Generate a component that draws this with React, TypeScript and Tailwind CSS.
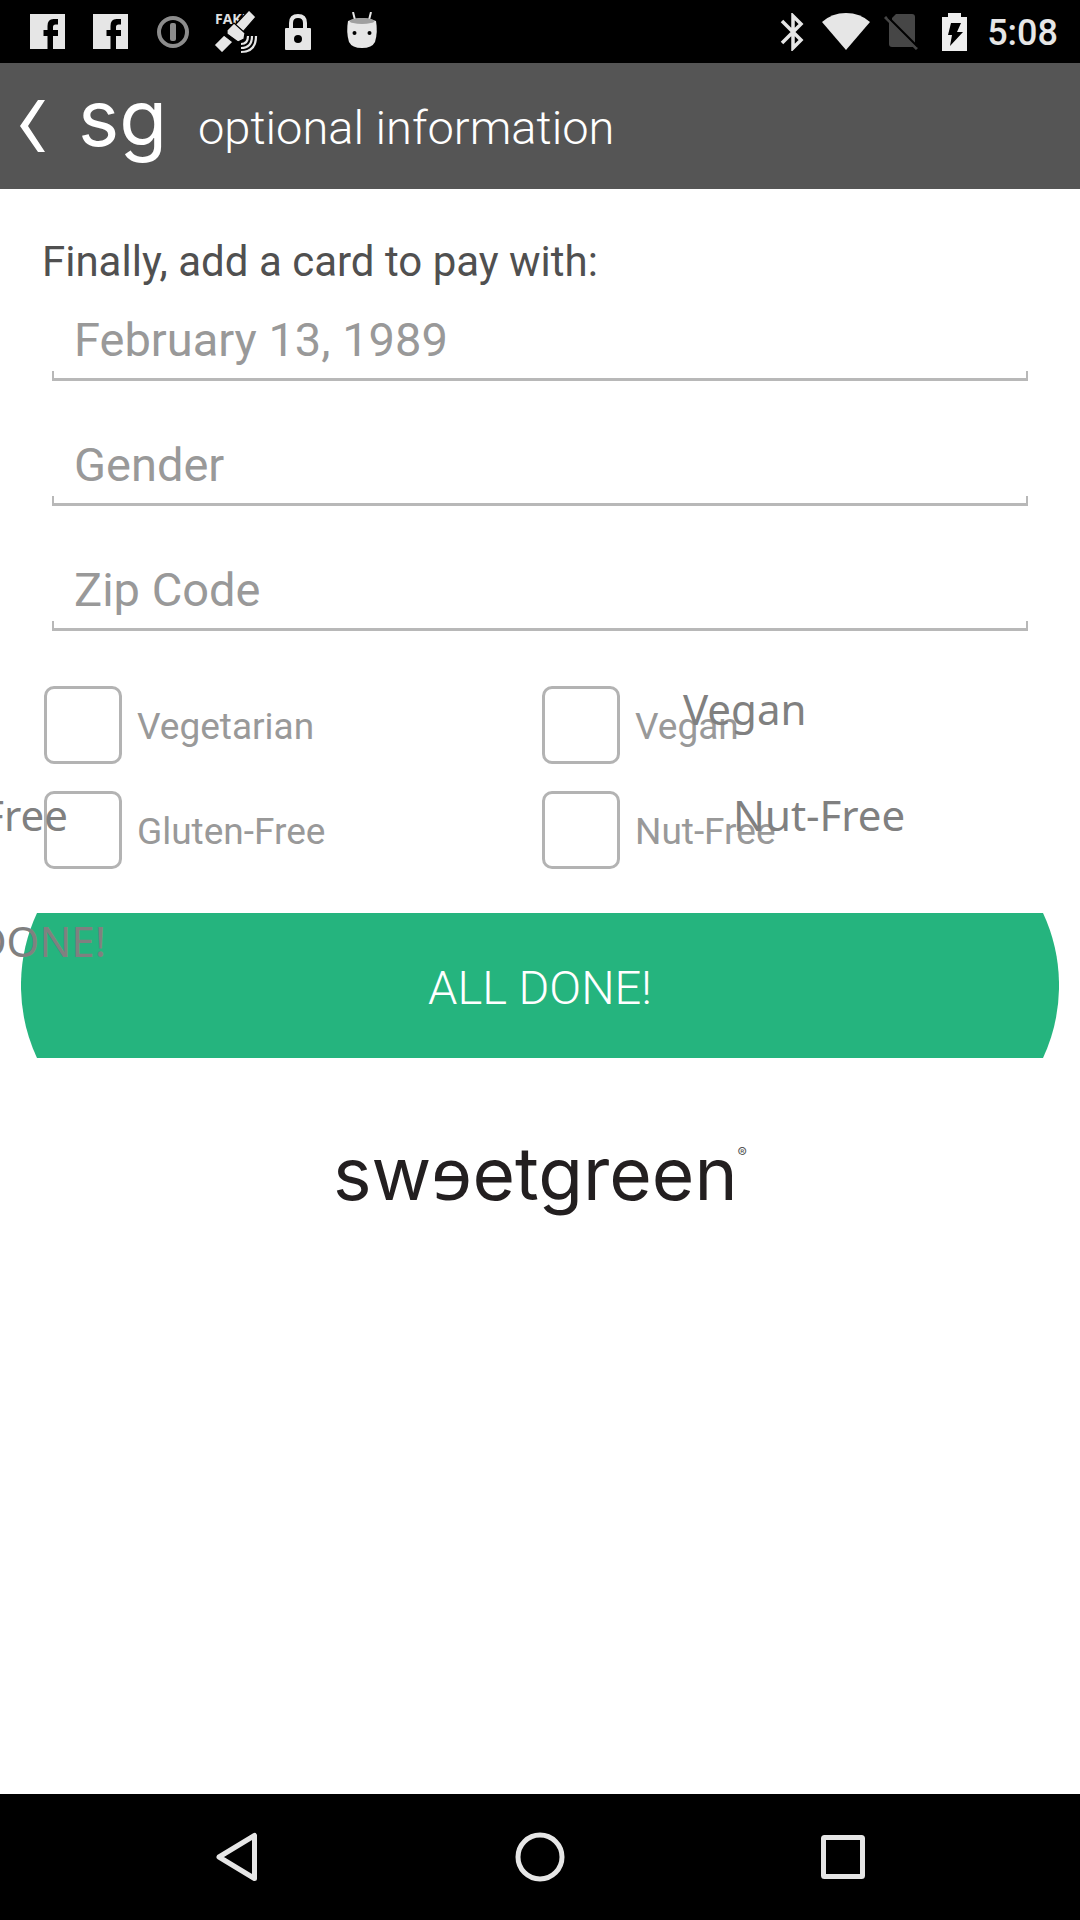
import React from "react";

function FacebookIcon() {
  return (
    <svg viewBox="0 0 35 35" className="h-[35px] w-[35px]" aria-hidden="true">
      <path
        fill="#e6e6e6"
        d="M0 0H35V35H23V22H28V16H23V13Q23 10.500 25.500 10.500H28V5H23.500Q17.500 5 17.500 12V16H13.500V22H17.500V35H0Z"
      />
    </svg>
  );
}

function StatusBar() {
  return (
    <div className="flex h-[63px] items-center justify-between bg-black pr-[22px] pl-[30px]">
      <div className="flex items-center">
        <FacebookIcon />
        <div className="w-7" />
        <FacebookIcon />
        <svg viewBox="0 0 32 32" className="ml-[29px] h-8 w-8" aria-hidden="true">
          <circle cx="16" cy="16" r="14" fill="none" stroke="#8c8c8c" strokeWidth="4" />
          <rect x="13" y="7" width="6" height="18" rx="2" fill="#8c8c8c" />
        </svg>
        <div className="relative ml-6 h-[44px] w-[46px]">
          <span className="absolute top-[2px] left-[2px] font-[Open_Sans] text-[14px] leading-[14px] font-bold text-[#e0e0e0]">
            FAKE
          </span>
          <svg viewBox="0 0 46 44" className="absolute inset-0 h-[44px] w-[46px]" aria-hidden="true">
            <g fill="#e6e6e6" stroke="#000" strokeWidth="1.200">
              <path d="M36 0L43 7L30 22L22 15Z" />
              <path d="M1 35L11 25L20 32L9 43Z" />
              <path d="M14 20L21 13L32 23L31 29L25 32L14 24Z" />
            </g>
            <path
              d="M28 34Q35 34 35 26M28 38Q39 38 39 26M28 42Q43 42 43 26"
              fill="none"
              stroke="#e6e6e6"
              strokeWidth="2.200"
            />
          </svg>
        </div>
        <svg viewBox="0 0 26 36" className="ml-[26px] h-9 w-[26px]" aria-hidden="true">
          <path d="M6 15V9Q6 2 13 2T20 9V15" fill="none" stroke="#e6e6e6" strokeWidth="4" />
          <rect y="14" width="26" height="22" rx="1" fill="#e6e6e6" />
          <circle cx="13" cy="25" r="4" fill="#000" />
        </svg>
        <svg viewBox="0 0 32 36" className="mb-1 ml-[35px] h-9 w-8" aria-hidden="true">
          <path d="M7 0L9 8M25 0L23 8" stroke="#e6e6e6" strokeWidth="2" />
          <path d="M2 9Q16 3 30 9Q32 20 29 30Q26 36 16 36T3 30Q0 20 2 9Z" fill="#e6e6e6" />
          <ellipse cx="16" cy="9" rx="12.500" ry="3" fill="#a0a0a0" />
          <circle cx="8.500" cy="21" r="2" fill="#000" />
          <circle cx="23.500" cy="21" r="2" fill="#000" />
        </svg>
      </div>
      <div className="flex items-center">
        <svg viewBox="0 0 24 38" className="h-[38px] w-6" aria-hidden="true">
          <path
            d="M2 8L21 27L13 35V3L21 11L2 30"
            fill="none"
            stroke="#e6e6e6"
            strokeWidth="3.500"
          />
        </svg>
        <svg viewBox="0 0 48 37" className="ml-[18px] h-[37px] w-12" aria-hidden="true">
          <path d="M0 9Q10 0 24 0T48 9L24 37Z" fill="#e6e6e6" />
        </svg>
        <svg viewBox="0 0 36 36" className="ml-[14px] h-9 w-9" aria-hidden="true">
          <path d="M12 0H28Q31 0 31 3V31L8 8V4Z" fill="#464646" />
          <path d="M5 8L29 32V33H8Q5 33 5 30Z" fill="#464646" />
          <path d="M1 3L33 35" stroke="#464646" strokeWidth="3" />
          <path d="M4 3L34 33" stroke="#000" strokeWidth="2" />
        </svg>
        <svg viewBox="0 0 25 38" className="ml-[22px] h-[38px] w-[25px]" aria-hidden="true">
          <path d="M6 0H19V4H25V38H0V4H6Z" fill="#eee" />
          <path d="M9 10H19L15 19H21L8 33L10 22H6Z" fill="#000" />
        </svg>
        <span className="ml-5 pt-[2px] text-[36px] leading-[42px] font-medium text-[#e6e6e6]">5:08</span>
      </div>
    </div>
  );
}

function Header() {
  return (
    <header className="flex h-[126px] items-center bg-[#555] pl-5 text-white">
      <button type="button" aria-label="Back" className="h-[52px] w-[26px]">
        <svg viewBox="0 0 26 52" className="h-[52px] w-[26px]">
          <path d="M18 0H25L8 26L25 52H18L0 26Z" fill="#fff" />
        </svg>
      </button>
      <span className="ml-8 w-[88px] pb-4 font-[Inter] text-[78px] leading-[88px] text-white">sg</span>
      <h1 className="ml-8 pt-1 text-[47px] leading-[56px] font-light">optional information</h1>
    </header>
  );
}

function Field({ label, value }: { label: string; value?: string }) {
  return (
    <div className="h-[125px]">
      <input
        type="text"
        aria-label={label}
        placeholder={label}
        defaultValue={value}
        className="block h-[62px] w-full bg-transparent px-[22px] pt-px text-[47px] text-[#999] outline-none placeholder:text-[#999] placeholder:opacity-100"
      />
      <div className="h-[10px] border-x-2 border-b-3 border-[#b8b8b8]" />
    </div>
  );
}

function Option({ label }: { label: string }) {
  return (
    <label className="flex h-[78px] items-center gap-[15px] text-[37px] text-[#999]">
      <input
        type="checkbox"
        className="h-[78px] w-[78px] appearance-none rounded-[10px] border-[3px] border-[#b3b3b3] bg-white checked:bg-[#25b47e]"
      />
      <span className="pt-1">{label}</span>
    </label>
  );
}

const overlay =
  "pointer-events-none absolute font-[Noto_Sans] whitespace-nowrap text-[#808080] text-[42px] leading-[58px]";

export default function App() {
  return (
    <div className="flex min-h-screen flex-col overflow-hidden bg-white font-[Roboto,sans-serif]">
      <StatusBar />
      <Header />
      <main className="flex flex-1 flex-col">
        <p className="mt-[49px] ml-[42px] text-[42px] leading-[48px] text-[#505050]">
          Finally, add a card to pay with:
        </p>
        <form onSubmit={(e) => e.preventDefault()}>
          <div className="mt-[23px] px-[52px]">
            <Field label="Birthday" value="February 13, 1989" />
            <Field label="Gender" />
            <Field label="Zip Code" />
          </div>
          <div className="relative mt-[2px]">
            <div className="grid grid-cols-2 gap-y-[27px] pr-[40px] pl-[44px]">
              <Option label="Vegetarian" />
              <Option label="Vegan" />
              <Option label="Gluten-Free" />
              <Option label="Nut-Free" />
            </div>
            <span className={`${overlay} top-[-6px] left-[683px]`}>Vegan</span>
            <span className={`${overlay} top-[100px] left-[733px]`}>Nut-Free</span>
            <span className={`${overlay} top-[100px] right-[calc(100%-68px)]`}>Gluten-Free</span>
          </div>
          <div className="relative mt-11 px-[21px]">
            <button type="submit" className="flex h-[145px] w-full">
              <svg viewBox="0 0 16 145" className="h-[145px] w-4" aria-hidden="true">
                <path d="M16 0A172 172 0 0 0 16 145Z" fill="#25b47e" />
              </svg>
              <span className="flex h-full flex-1 items-center justify-center bg-[#25b47e] pt-[6px] text-[47px] font-light text-white">
                ALL DONE!
              </span>
              <svg viewBox="0 0 16 145" className="h-[145px] w-4" aria-hidden="true">
                <path d="M0 0A172 172 0 0 1 0 145Z" fill="#25b47e" />
              </svg>
            </button>
            <span className={`${overlay} top-[-1px] right-[calc(100%-106px)]`}>ALL DONE!</span>
          </div>
        </form>
        <div className="mt-[70px] flex items-start justify-center font-[Inter] text-[73px] leading-[88px] text-[#231f20]">
          <span>
            sw<span className="font-[Noto_Sans]">ɘ</span>etgreen
          </span>
          <span className="mt-4 text-[14px] leading-[18px] text-[#555]">®</span>
        </div>
      </main>
      <nav className="grid h-[126px] grid-cols-3 place-items-center bg-black px-[86px]">
        <button type="button" aria-label="Back">
          <svg viewBox="0 0 44 50" className="h-[50px] w-11">
            <path d="M39.500 3.500V46.500L4 25Z" fill="none" stroke="#e6e6e6" strokeWidth="5" strokeLinejoin="round" />
          </svg>
        </button>
        <button type="button" aria-label="Home">
          <svg viewBox="0 0 50 50" className="h-[50px] w-[50px]">
            <circle cx="25" cy="25" r="22" fill="none" stroke="#e6e6e6" strokeWidth="5" />
          </svg>
        </button>
        <button type="button" aria-label="Recent apps">
          <svg viewBox="0 0 44 44" className="h-11 w-11">
            <rect x="2.500" y="2.500" width="39" height="39" rx="1" fill="none" stroke="#e6e6e6" strokeWidth="5" strokeLinejoin="round" />
          </svg>
        </button>
      </nav>
    </div>
  );
}
